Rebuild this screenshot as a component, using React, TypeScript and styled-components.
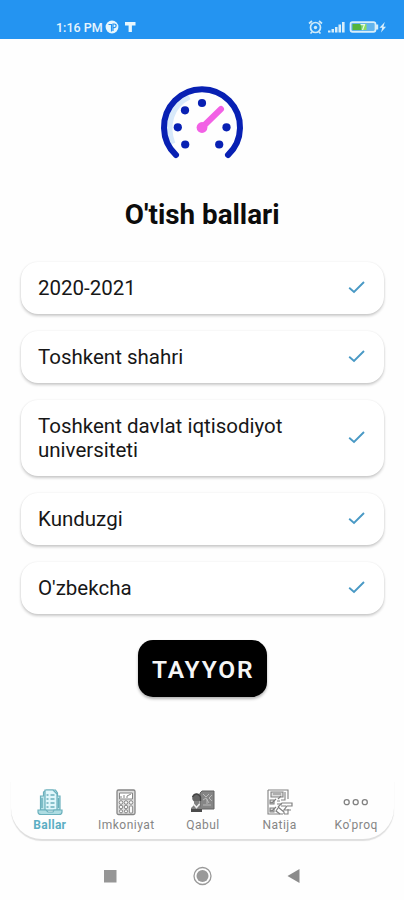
import React from "react";
import styled, { createGlobalStyle } from "styled-components";

const GlobalStyle = createGlobalStyle`
  * { box-sizing: border-box; }
  body { margin: 0; background: #fefefe; font-family: Roboto, "Liberation Sans", sans-serif; }
`;

const Screen = styled.div`
  width: 404px;
  height: 900px;
  display: flex;
  flex-direction: column;
  background: #fefefe;
  overflow: hidden;
`;

const StatusBar = styled.header`
  height: 39px;
  flex: none;
  padding: 15px 17px 0 56px;
  display: flex;
  justify-content: space-between;
  align-items: flex-start;
  background: #2494f1;
  color: #e6f4fd;
`;

const StatusGroup = styled.div`
  display: flex;
  align-items: center;
  height: 24px;
`;

const Clock = styled.span`
  width: 48px;
  margin-right: 1px;
  font-size: 12.5px;
  font-weight: 500;
  white-space: nowrap;
`;

const Content = styled.main`
  flex: 1;
  display: flex;
  flex-direction: column;
  align-items: center;
  padding: 43px 20px 0 20.5px;
`;

const GaugeArt = styled.svg`
  display: block;
  flex: none;
  margin-right: -1px;
  transform: translateX(-1px);
`;

const Title = styled.h1`
  margin: 33px 0 30.5px;
  font-size: 27.8px;
  line-height: 32px;
  height: 32px;
  font-weight: 700;
  color: #0c0c0c;
  white-space: nowrap;
`;

const OptionList = styled.div`
  width: 100%;
  display: flex;
  flex-direction: column;
  gap: 16.8px;
`;

const OptionCard = styled.button`
  width: 100%;
  min-height: 52.3px;
  padding: 14px 18px 13.5px 17.5px;
  border: 0;
  border-radius: 17px;
  background: #fff;
  box-shadow: 0 2px 3px rgba(0, 0, 0, 0.2), 0 0 2px rgba(0, 0, 0, 0.08);
  display: flex;
  align-items: center;
  justify-content: space-between;
  text-align: left;
  font-family: inherit;
  font-size: 20.5px;
  line-height: 24.3px;
  color: #171717;
`;

const OptionLabel = styled.span`
  max-width: 270px;
`;

const SubmitButton = styled.button`
  width: 129px;
  height: 57px;
  flex: none;
  margin-top: 26.5px;
  padding: 2px 0 0 2px;
  border: 0;
  border-radius: 15px;
  background: #000;
  color: #f6f6f6;
  box-shadow: 0 2px 3px rgba(0, 0, 0, 0.3);
  font-family: inherit;
  font-size: 24.5px;
  font-weight: 600;
  letter-spacing: 1.9px;
`;

const TabBar = styled.nav`
  height: 58px;
  flex: none;
  margin: 0 10px 0 11px;
  display: grid;
  grid-template-columns: repeat(5, 1fr);
  border-radius: 0 0 31px 31px;
  background: #fefefe;
  box-shadow: 0 1.5px 1px #dedede;
`;

const Tab = styled.button<{ $active?: boolean }>`
  min-width: 0;
  padding: 7px 0 0 1px;
  border: 0;
  background: transparent;
  display: flex;
  flex-direction: column;
  align-items: center;
  gap: 2px;
  color: ${({ $active }) => ($active ? "#5caec4" : "#858585")};
  font-family: inherit;
  font-size: 12px;
  line-height: 14px;
  font-weight: ${({ $active }) => ($active ? 700 : 400)};
  letter-spacing: ${({ $active }) => ($active ? "0.3px" : "0.5px")};
  white-space: nowrap;
  svg { display: block; }
`;

const SystemBar = styled.footer`
  height: 61px;
  flex: none;
  padding: 25px 103px 0 103px;
  display: flex;
  align-items: flex-start;
  justify-content: space-between;
`;

const Check = () => (
  <svg width="18" height="18" viewBox="0 0 18 18" fill="none" stroke="#4999c5" strokeWidth="1.9">
    <path d="M1.2 8.8 6 13 16 3" />
  </svg>
);

const NoticeIcons = () => (
  <svg width="33" height="16" viewBox="0 0 33 16">
    <circle cx="7" cy="8" r="6.4" fill="#e9f7fd" />
    <path d="M3.5 5.5h3v7M8 12V5h1.3a1.8 1.8 0 0 1 0 3.7H8" fill="none" stroke="#2494f1" strokeWidth="1.2" />
    <path d="M20 3h10.5v3.5h-3.6V13h-3.3V6.500H20z" fill="#e9f7fd" />
  </svg>
);

const DeviceIcons = () => (
  <svg width="80" height="18" viewBox="0 0 80 18" fill="none">
    <g stroke="#cfeaf8" strokeWidth="1.7">
      <circle cx="8.500" cy="9.5" r="5" />
      <path d="M2 5.5 5 3M12 3l3 2.500M5 14l-1.500 1.500M12 14l1.500 1.500" />
    </g>
    <circle cx="8.500" cy="9.500" r="1.700" fill="#cfeaf8" />
    <g fill="#d8eefa">
      <path d="M21 12.500h2.500v2H21zM24.500 11h2.500v3.500h-2.500zM28 9h2.500v5.500H28zM31.500 6.500H34v8h-2.500zM35 4h2.600v10.500H35z" />
      <path d="M69 6.500h2.200v5H69z" />
      <path d="m77.800 4-5.300 5.700h2.700l-1.200 4.800L79 8.700h-2.600z" />
    </g>
    <rect x="43.500" y="4.200" width="25" height="9.600" rx="2" fill="#63b4ec" stroke="#d8eefa" strokeWidth="1.700" />
    <path d="M45.500 6h9v6h-9z" fill="#53b43b" />
    <path d="M54.500 6h5v6h-5z" fill="#8cde5e" />
    <path d="M53.500 6.700h4L55.500 12" stroke="#e4f8e8" strokeWidth="1.200" />
  </svg>
);

const Gauge = () => (
  <GaugeArt width="90" height="84" viewBox="0 0 90 84">
    <path d="M15 62C8 44 13 23 32 14" fill="none" stroke="#d8e9fa" strokeWidth="7" />
    <path d="M19 73A38 38 0 1 1 71 73" fill="none" stroke="#0820b3" strokeWidth="6" strokeLinecap="round" />
    <g fill="#0820b3">
      <circle cx="45" cy="21" r="4.1" /><circle cx="28" cy="28.3" r="4.1" />
      <circle cx="20.8" cy="45.3" r="4.1" /><circle cx="28.2" cy="62.5" r="4.1" />
      <circle cx="62.2" cy="62.5" r="4.1" /><circle cx="69.5" cy="45.3" r="4.1" />
    </g>
    <path d="M45 45.5 64 27" stroke="#f260e5" strokeWidth="6" strokeLinecap="round" />
    <circle cx="45" cy="45.5" r="5.4" fill="#f260e5" />
  </GaugeArt>
);

const ScoresIcon = () => (
  <svg width="28" height="28" viewBox="0 0 28 28" fill="none" stroke="#6ab0bc" strokeWidth="1.2">
    <path d="M4.500 8h3V4l3-2h9l2 3v3h2.500v14H4.500z" fill="#bce4e9" />
    <path d="M9 2h8l4 4v16H9z" fill="#e0f7fb" />
    <path d="M10.500 7h2m2 0h4M10.500 11h2m2 0h4M10.500 15h2m2 0h4M10.500 19h2m2 0h4M6 10v10M22.500 10v10" strokeWidth="1.500" />
    <path d="M2 22h8l2 2h5l1-2h8v2c0 1.500-1 2.500-3 2.500H5c-2 0-3-1-3-2.500z" fill="#aedde3" />
  </svg>
);

const CalculatorIcon = () => (
  <svg width="28" height="28" viewBox="0 0 28 28" fill="none" stroke="#858585" strokeWidth="1">
    <rect x="5" y="2" width="18" height="24.500" rx="1.500" fill="#e0e0e0" strokeWidth="1.300" />
    <path d="M7.500 5h13v6h-13zM9 10V8m3 2V7m3 3V8l4-2" fill="#fff" />
    <g fill="#f8f8f8">
      <circle cx="9" cy="14.500" r="1.800" /><circle cx="14" cy="14.500" r="1.800" /><circle cx="19" cy="14.500" r="1.800" />
      <circle cx="9" cy="19" r="1.800" /><circle cx="14" cy="19" r="1.800" />
      <circle cx="9" cy="23.300" r="1.600" /><circle cx="14" cy="23.300" r="1.600" />
      <rect x="17.300" y="18" width="3.400" height="7" rx="1" />
    </g>
  </svg>
);

const AdmissionIcon = () => (
  <svg width="28" height="28" viewBox="0 0 28 28" fill="none">
    <path d="m11 5 2-2h12v18H13l-2-2z" fill="#858585" stroke="#636363" />
    <path d="m14 6 3 3 3-3m3 1-3 3 3 3m-9-1 3-2 3 5m-6 2h8m-4-6v5" stroke="#c7c7c7" strokeWidth=".8" />
    <circle cx="7.500" cy="10" r="4.300" fill="#656565" />
    <path d="M3.500 9c2-4 6-4 8 0v4" stroke="#444" strokeWidth="1.400" />
    <path d="M5 13h5v4l3 3v4H2v-4l3-3z" fill="#808080" />
    <path d="M2 21h11v3H2z" fill="#4c4c4c" />
    <path d="m4.500 16 3 3.500 3-3.500" stroke="#eee" strokeWidth="1.500" />
  </svg>
);

const ResultsIcon = () => (
  <svg width="28" height="28" viewBox="0 0 28 28" fill="none" stroke="#808080" strokeWidth="1.1">
    <path d="M2 2h20v9M2 2v24h15M22 21v5h-4" />
    <path d="M5 4h12v5H5zM7 6h8M4 12h4v4H4zm0 8h4v4H4z" fill="#ddd" />
    <path d="m4 14 2 1 4-4m-6 11 2 1 4-4M11 13h3m-3 3h5m3-12v8h-4m-3-1 3-3" />
    <path d="m12 19 4-4h10v3h-5l-3 4h7M12 20l-2 3 4 3m-2-7 6 5v2m-3-8h5" strokeWidth="1.2" />
  </svg>
);

const MoreIcon = () => (
  <svg width="28" height="28" viewBox="0 0 28 28" fill="none" stroke="#818181" strokeWidth="1.3">
    <circle cx="4.7" cy="14.2" r="2.5" /><circle cx="13.700" cy="14.2" r="2.5" /><circle cx="22.800" cy="14.2" r="2.5" />
  </svg>
);

const options = [
  "2020-2021",
  "Toshkent shahri",
  "Toshkent davlat iqtisodiyot universiteti",
  "Kunduzgi",
  "O'zbekcha",
];

const tabs = [
  { label: "Ballar", Icon: ScoresIcon },
  { label: "Imkoniyat", Icon: CalculatorIcon },
  { label: "Qabul", Icon: AdmissionIcon },
  { label: "Natija", Icon: ResultsIcon },
  { label: "Ko'proq", Icon: MoreIcon },
];

export default function App() {
  return (
    <>
      <GlobalStyle />
      <Screen>
        <StatusBar>
          <StatusGroup><Clock>1:16 PM</Clock><NoticeIcons /></StatusGroup>
          <StatusGroup><DeviceIcons /></StatusGroup>
        </StatusBar>
        <Content>
          <Gauge />
          <Title>O'tish ballari</Title>
          <OptionList>
            {options.map((label) => (
              <OptionCard key={label}>
                <OptionLabel>{label}</OptionLabel>
                <Check />
              </OptionCard>
            ))}
          </OptionList>
          <SubmitButton>TAYYOR</SubmitButton>
        </Content>
        <TabBar>
          {tabs.map(({ label, Icon }, index) => (
            <Tab key={label} $active={index === 0}><Icon />{label}</Tab>
          ))}
        </TabBar>
        <SystemBar>
          <svg width="14" height="24" viewBox="0 0 14 24"><path d="M1 6h12.5v12.5H1z" fill="#969696" /></svg>
          <svg width="22" height="24" viewBox="0 0 22 24">
            <circle cx="11.5" cy="12" r="8.5" fill="none" stroke="#999" strokeWidth="1.3" />
            <circle cx="11.5" cy="12" r="6" fill="#999" />
          </svg>
          <svg width="14" height="24" viewBox="0 0 14 24"><path d="M.5 12 12.5 5v14z" fill="#8b8b8b" /></svg>
        </SystemBar>
      </Screen>
    </>
  );
}
